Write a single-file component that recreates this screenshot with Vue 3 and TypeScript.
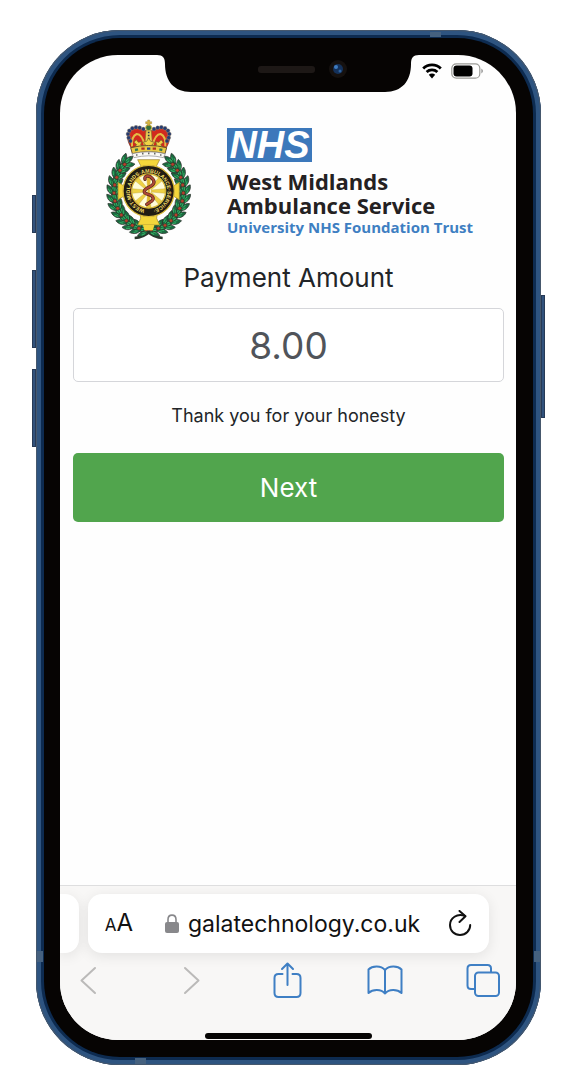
<script setup lang="ts">
import { ref } from 'vue'

interface Leaf {
  x: number
  y: number
  rot: number
}

interface Point {
  x: number
  y: number
}

const amount = ref('8.00')
const address = ref('galatechnology.co.uk')

const cx = 161
const cy = 244

function polar(deg: number, rx: number, ry: number): Point {
  const a = (deg * Math.PI) / 180
  return { x: Math.round(cx + rx * Math.sin(a)), y: Math.round(cy - ry * Math.cos(a)) }
}

/* Laurel leaves climb both sides of the badge from the bottom knot. */
const leaves: Leaf[] = []
const berries: Point[] = []
for (const side of [-1, 1]) {
  for (let d = 172; d >= 34; d -= 12) {
    const climb = side * (d - 90)
    leaves.push({ ...polar(side * d, 115, 126), rot: climb + side * 32 })
    leaves.push({ ...polar(side * d, 94, 104), rot: climb - side * 32 })
    leaves.push({ ...polar(side * (d - 4), 105, 116), rot: climb })
    berries.push(polar(side * (d + 4), 104, 114))
  }
}

const spokes = [0, 45, 90, 135, 180, 225, 270, 315]

const crownBeads: Point[] = [
  { x: 106, y: 92 }, { x: 101, y: 82 }, { x: 99, y: 71 }, { x: 103, y: 61 }, { x: 112, y: 54 },
  { x: 123, y: 51 }, { x: 134, y: 52 }, { x: 145, y: 56 }, { x: 177, y: 56 }, { x: 188, y: 52 },
  { x: 199, y: 51 }, { x: 210, y: 54 }, { x: 219, y: 61 }, { x: 223, y: 71 }, { x: 221, y: 82 }, { x: 216, y: 92 },
]
</script>

<template>
  <main class="stage">
    <div class="phone">
      <i class="key mute"></i>
      <i class="key vol-up"></i>
      <i class="key vol-down"></i>
      <i class="key power"></i>
      <i class="band band-top"></i>
      <i class="band band-left"></i>
      <i class="band band-right"></i>
      <i class="band band-bottom"></i>
      <div class="bezel">
        <div class="screen">
          <svg class="notch" width="262" height="38" viewBox="0 0 262 38" aria-hidden="true">
            <path d="M0 0C6 0 8 3 8 9C8 26 17 37 34 37H228C245 37 254 26 254 9C254 3 256 0 262 0Z" fill="#060403" />
            <rect x="101" y="11" width="57" height="7" rx="3" fill="#1d1816" />
            <circle cx="181" cy="14" r="9" fill="#15110f" />
            <circle cx="181" cy="14" r="5" fill="#14315a" />
            <circle cx="179" cy="12" r="2" fill="#3f7cc0" />
            <circle cx="183" cy="16" r="1.500" fill="#2c62a0" />
          </svg>

          <header class="status">
            <svg width="20" height="16" viewBox="0 0 20 16" role="img" aria-label="Wi-Fi">
              <g fill="none" stroke="#000" stroke-width="2.800">
                <path d="M1.200 5.400C6 .6 14 .6 18.800 5.400" />
                <path d="M4.600 9C7.600 6.200 12.400 6.200 15.400 9" />
              </g>
              <path d="M6.800 11.800C8.600 10.200 11.400 10.200 13.200 11.800L10 15.400Z" />
            </svg>
            <svg width="33" height="16" viewBox="0 0 33 16" role="img" aria-label="Battery">
              <rect x=".8" y=".8" width="28" height="14.400" rx="4.500" fill="#fff" stroke="#9b9b97" stroke-width="1.200" />
              <rect x="2.500" y="2.500" width="19" height="11" rx="3" />
              <path d="M30.500 5.500Q33 8 30.500 10.500Z" fill="#777" />
            </svg>
          </header>

          <section class="content">
            <div class="brand">
              <svg class="crest" width="88" height="125" viewBox="30 20 264 375" role="img" aria-label="Ambulance service crest">
                <defs>
                  <path id="motto" d="M149 298A56 56 0 1 1 173 298A56 56 0 0 1 149 298" />
                  <g id="leaf">
                    <path d="M0 -19C9 -9 10 6 0 16C-10 6 -9 -9 0 -19Z" fill="#1b6a40" stroke="#2b2d28" stroke-width="2" />
                    <path d="M-3 -7V5M3 -2V9" stroke="#33b565" stroke-width="3" />
                  </g>
                </defs>
                <path d="M119 383Q145 382 166 362M203 383Q177 382 156 362" fill="none" stroke="#29382d" stroke-width="8" />
                <use v-for="(leaf, i) in leaves" :key="i" href="#leaf" :transform="`translate(${leaf.x} ${leaf.y}) rotate(${leaf.rot})`" />
                <circle v-for="(b, i) in berries" :key="'b' + i" :cx="b.x" :cy="b.y" r="5" fill="#b8402e" stroke="#3e2419" />

                <g fill="#f4d63b" stroke="#98812d" stroke-width="2">
                  <path d="M128 148H194L185 166L188 190H134L137 166Z" />
                  <path d="M128 344H194L185 324L188 300H134L137 324Z" />
                  <path d="M69 216L84 225L104 217V267L84 259L69 268Z" />
                  <path d="M253 216L238 225L218 217V267L238 259L253 268Z" />
                </g>
                <path d="M144 344H178L174 360H148Z" fill="#f4d63b" />
                <circle cx="161" cy="242" r="77" fill="#211c13" stroke="#d8b93b" stroke-width="4" />
                <circle cx="161" cy="242" r="51" fill="#fffbd9" stroke="#d8b93b" stroke-width="4" />
                <path v-for="s in spokes" :key="s" d="M158 234L154 193H168L164 234Z" fill="#eed144" stroke="#b1942d" :transform="`rotate(${s} 161 242)`" />
                <text class="motto"><textPath href="#motto">WEST·MIDLANDS·AMBULANCE·SERVICE·</textPath></text>
                <path d="M161 194V288" stroke="#e1b62f" stroke-width="7" />
                <path d="M150 207C147 197 160 194 168 201C182 212 179 222 163 230C144 239 143 248 159 252C178 257 179 269 164 276L155 282" fill="none" stroke="#52231a" stroke-width="10" stroke-linecap="round" />
                <path d="M150 207C147 197 160 194 168 201C182 212 179 222 163 230C144 239 143 248 159 252C178 257 179 269 164 276L155 282" fill="none" stroke="#ad4937" stroke-width="6" stroke-linecap="round" />

                <path d="M111 117C102 102 91 80 103 64C116 48 144 52 161 67C178 52 206 48 219 64C231 80 220 102 211 117Z" fill="#d2291e" stroke="#6d3021" stroke-width="2" />
                <path d="M111 108Q109 78 125 71Q141 70 150 107M211 108Q213 78 197 71Q181 70 172 107" fill="none" stroke="#e2bd45" stroke-width="6" />
                <path d="M149 109L153 61H169L173 109Z" fill="#ecd056" stroke="#886d2d" stroke-width="2" />
                <path d="M161 64V104" stroke="#27354e" stroke-width="5" stroke-dasharray="5 4" />
                <g fill="#263b72" stroke="#b8a16a">
                  <circle v-for="(b, i) in crownBeads" :key="'c' + i" :cx="b.x" :cy="b.y" r="6" />
                </g>
                <circle cx="161" cy="52" r="9" fill="#38733b" stroke="#d4b23c" stroke-width="3" />
                <path d="M158 29H164V34H170V40H164V46H158V40H152V34H158Z" fill="#d8b63c" stroke="#80682d" />
                <path d="M124 88L130 96L140 94L137 103L143 110H119L125 103L117 96ZM198 88L192 96L182 94L185 103L179 110H203L197 103L205 96ZM161 83L167 93L178 96L170 104V112H152V104L144 96L155 93Z" fill="#f0d345" stroke="#705c2a" stroke-width="2" />
                <path d="M107 112Q161 99 215 112L210 130Q161 119 112 130Z" fill="#e9c944" stroke="#6b522c" stroke-width="3" />
                <path d="M120 119L129 117M193 117L202 119" stroke="#34764d" stroke-width="7" />
                <path d="M139 115H149M173 115H183" stroke="#b32d22" stroke-width="7" />
                <path d="M156 115H166" stroke="#2b4385" stroke-width="7" />
                <path d="M111 130Q161 119 211 130L205 142Q161 131 117 142Z" fill="#faf9f4" stroke="#888" stroke-width="2" />
                <path d="M124 134H127M142 130H145M160 129H163M178 130H181M196 134H199" stroke="#222" stroke-width="5" />
              </svg>
              <div class="trust">
                <span class="nhs">NHS</span>
                <strong>West Midlands</strong>
                <strong>Ambulance Service</strong>
                <em>University NHS Foundation Trust</em>
              </div>
            </div>

            <form class="pay" @submit.prevent>
              <label for="amount">Payment Amount</label>
              <input id="amount" v-model="amount" type="text" inputmode="decimal" />
              <p>Thank you for your honesty</p>
              <button type="submit">Next</button>
            </form>
          </section>

          <footer class="browser">
            <div class="tabs">
              <div class="card previous"></div>
              <div class="card current">
                <button class="reader" type="button" aria-label="Page settings"><small>A</small><span>A</span></button>
                <svg class="lock" width="14" height="20" viewBox="0 0 14 20" aria-hidden="true">
                  <path d="M3 10V5.500C3 -.3 11 -.3 11 5.500V10" fill="none" stroke="#88888b" stroke-width="1.600" />
                  <rect y="8" width="14" height="11" rx="2" fill="#88888b" />
                </svg>
                <input v-model="address" type="text" aria-label="Address" />
                <button class="reload" type="button" aria-label="Reload">
                  <svg width="24" height="28" viewBox="0 0 24 28" fill="none" stroke="#111" stroke-width="2" stroke-linecap="round" stroke-linejoin="round">
                    <path d="M17 6C9 3 2 8 2 15C2 21 6.500 25 12 25C18 25 22.200 20.500 22.200 15" />
                    <path d="M11.500 1L17.500 6.300L11.500 12" />
                  </svg>
                </button>
              </div>
            </div>
            <nav class="tools" aria-label="Browser">
              <button type="button" aria-label="Back">
                <svg width="36" height="36" viewBox="0 0 36 36" stroke="#bbbab9"><path d="M24 6L10.500 18.500L24 31" /></svg>
              </button>
              <button type="button" aria-label="Forward">
                <svg width="36" height="36" viewBox="0 0 36 36" stroke="#bbbab9"><path d="M15 6L28.500 18.500L15 31" /></svg>
              </button>
              <button type="button" aria-label="Share">
                <svg width="36" height="36" viewBox="0 0 36 36" stroke="#3f7fc4">
                  <path d="M14.500 12H10.500Q6.500 12 6.500 16V31Q6.500 35 10.500 35H28.500Q32.500 35 32.500 31V16Q32.500 12 28.500 12H24.500M19.500 23V2M14 7L19.500 1.500L25 7" />
                </svg>
              </button>
              <button type="button" aria-label="Bookmarks">
                <svg width="36" height="36" viewBox="0 0 36 36" stroke="#3f7fc4">
                  <path d="M18 8C14 3.500 5.500 3.500 1.500 7.500V31C6 27 14 27 18 31.500C22 27 30 27 34.500 31V7.500C30.500 3.500 22 3.500 18 8ZM18 8V31.500" />
                </svg>
              </button>
              <button type="button" aria-label="Tabs">
                <svg width="36" height="36" viewBox="0 0 36 36" stroke="#3f7fc4">
                  <path d="M9.500 27H6Q2.500 27 2.500 23.500V6.500Q2.500 3 6 3H22.500Q26 3 26 6.500V10" />
                  <rect x="10" y="10.500" width="24" height="23.500" rx="3.500" />
                </svg>
              </button>
            </nav>
            <div class="home"></div>
          </footer>
        </div>
      </div>
    </div>
  </main>
</template>

<style>
body {
  background: #fff;
}
</style>

<style scoped>
* {
  box-sizing: border-box;
}

.stage {
  display: flex;
  min-height: 100vh;
  padding: 30px 29px 23px 36px;
  font-family: Inter, "Liberation Sans", sans-serif;
  color: #222528;
}

.phone {
  position: relative;
  display: flex;
  flex: 1;
  min-width: 0;
  padding: 8px;
  border-radius: 84px;
  background: #0d2b50;
  box-shadow: inset 0 0 0 1px #46586d, inset 0 0 0 5px #2e5480;
}

.bezel {
  display: flex;
  flex: 1;
  min-width: 0;
  padding: 17px 17px 17px 16px;
  border-radius: 76px;
  background: #060403;
}

.screen {
  position: relative;
  display: flex;
  flex: 1;
  flex-direction: column;
  min-width: 0;
  overflow: hidden;
  border-radius: 58px;
  background: #fefefe;
}

.key {
  position: absolute;
  width: 4px;
  background: #31527c;
  border: 1px solid #273a56;
}

.mute { left: -4px; top: 165px; height: 38px; }
.vol-up { left: -4px; top: 240px; height: 78px; }
.vol-down { left: -4px; top: 339px; height: 78px; }
.power { right: -4px; top: 265px; height: 123px; }

.band {
  position: absolute;
  background: #45617f;
}

.band-top { top: 2px; right: 100px; width: 11px; height: 5px; }
.band-left { bottom: 103px; left: 1px; width: 6px; height: 11px; }
.band-right { bottom: 103px; right: 1px; width: 6px; height: 11px; }
.band-bottom { bottom: 1px; left: 99px; width: 11px; height: 6px; }

.notch {
  position: absolute;
  top: 0;
  left: 50%;
  transform: translateX(-50%);
}

.status {
  display: flex;
  justify-content: flex-end;
  gap: 9px;
  padding: 8px 32px 0 0;
}

.status svg {
  display: block;
}

.content {
  flex: 1;
  padding: 38px 12px 24px 13px;
}

.brand {
  display: flex;
  gap: 34px;
  padding-left: 32px;
}

.crest {
  flex: none;
}

.motto {
  font: bold 16px "Liberation Sans", sans-serif;
  fill: #f6df67;
}

.trust {
  display: flex;
  flex-direction: column;
  align-items: flex-start;
  padding-top: 11px;
  font-family: "Open Sans", "Noto Sans", sans-serif;
  white-space: nowrap;
}

.nhs {
  width: 85px;
  height: 34px;
  margin-bottom: 7px;
  background: #3c78bb;
  color: #fff;
  font: italic bold 38px/34px "Liberation Sans", sans-serif;
  text-align: center;
}

.trust strong {
  font-size: 22px;
  font-weight: 700;
  line-height: 24px;
  color: #242122;
}

.trust em {
  font-size: 15px;
  font-style: normal;
  font-weight: 700;
  line-height: 20px;
  color: #3e7fc2;
}

.pay {
  display: flex;
  flex-direction: column;
  margin-top: 18px;
  text-align: center;
}

.pay label {
  font-size: 26px;
  line-height: 36px;
}

.pay input {
  width: 100%;
  height: 74px;
  margin-top: 12px;
  padding: 0 12px;
  border: 1px solid #d5d6da;
  border-radius: 5px;
  background: #fff;
  color: #50545a;
  font: 37px/48px Inter, sans-serif;
  text-align: center;
}

.pay p {
  margin: 20px 0 23px;
  font-size: 18px;
  line-height: 28px;
}

.pay button {
  height: 69px;
  border: 0;
  border-radius: 5px;
  background: #51a54d;
  color: #fff;
  font: 26px/36px Inter, sans-serif;
}

.browser {
  border-top: 1px solid #dededf;
  background: #f8f7f6;
}

.tabs {
  display: flex;
  gap: 9px;
  padding: 8px 27px 0 0;
}

.card {
  height: 59px;
  background: #fff;
  box-shadow: 0 3px 14px rgba(0, 0, 0, 0.09);
}

.previous {
  width: 19px;
  border-radius: 0 14px 14px 0;
}

.current {
  display: flex;
  flex: 1;
  align-items: center;
  min-width: 0;
  padding: 0 17px 0 16px;
  border-radius: 14px;
}

.card button,
.tools button {
  padding: 0;
  border: 0;
  background: none;
}

.reader {
  flex: none;
  width: 30px;
  color: #111;
  font: 24px/30px Inter, sans-serif;
  white-space: nowrap;
}

.reader small {
  font-size: 17px;
}

.lock {
  flex: none;
  margin: 0 9px 0 31px;
}

.current input {
  flex: 1;
  min-width: 0;
  padding: 0;
  border: 0;
  background: none;
  color: #111;
  font: 23px/30px Inter, sans-serif;
}

.reload svg,
.tools svg {
  display: block;
}

.tools {
  display: flex;
  justify-content: space-between;
  padding: 9px 15px 0 11px;
}

.tools svg {
  fill: none;
  stroke-width: 2;
  stroke-linecap: round;
  stroke-linejoin: round;
}

.home {
  width: 167px;
  height: 6px;
  margin: 35px auto 1px;
  border-radius: 3px;
  background: #060403;
}
</style>
